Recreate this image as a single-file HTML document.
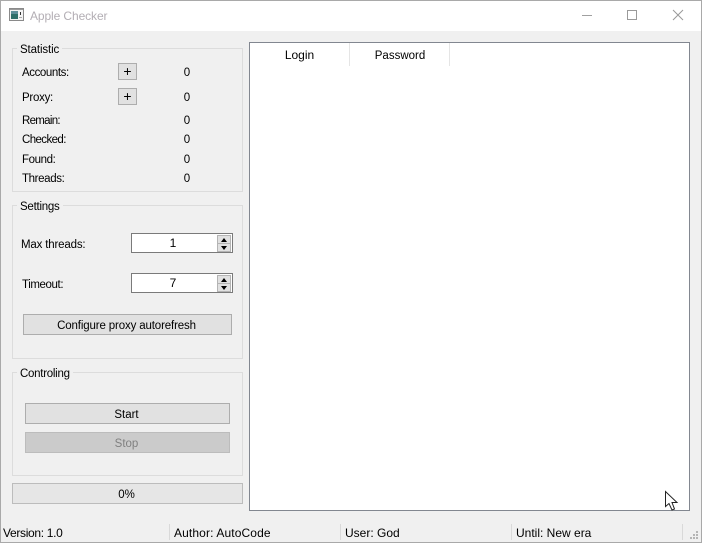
<!DOCTYPE html>
<html><head><meta charset="utf-8"><style>
html,body{margin:0;padding:0}
body{width:702px;height:543px;position:relative;overflow:hidden;background:#f0f0f0;font-family:"Liberation Sans",sans-serif;font-size:11.5px;color:#000}
div{position:absolute;box-sizing:border-box;white-space:nowrap}
.t{height:16px;line-height:18px}
.c{text-align:center}
.g{border:1px solid #dcdcdc}
.gt{background:#f0f0f0;padding:0 3px 0 3px;height:16px;line-height:18px}
.b{background:#e1e1e1;border:1px solid #adadad;text-align:center;padding-right:2px}
.s{width:102px;height:20px;background:#fff;border:1px solid #7a7a7a;line-height:19px;font-size:12px;padding-right:18px}
.sb{position:absolute;background:#e1e1e1;border:1px solid #b4b4b4;width:14px;height:9px;padding:0}
.up,.dn{position:absolute;left:3px;width:0;height:0;border-left:3.5px solid transparent;border-right:3.5px solid transparent}
.up{top:2px;border-bottom:4px solid #000}
.dn{top:2px;border-top:4px solid #000}
.t.st{font-size:12px;line-height:16px}
</style></head><body>
<div style="left:0;top:0;width:702px;height:31px;background:#fff"></div>
<div style="left:0;top:0;width:702px;height:543px;border:1px solid #a9a9a9;z-index:5"></div>
<svg style="position:absolute;left:9px;top:8px" width="16" height="14" viewBox="0 0 16 14"><rect x="0.5" y="0.5" width="14" height="12" fill="#f4f4f4" stroke="#8a8a8a"/><rect x="1" y="1" width="13" height="1" fill="#9a9a9a"/><rect x="2" y="3" width="7" height="8" fill="#2f6f6a"/><rect x="2" y="3" width="7" height="3" fill="#5f8f9a"/><rect x="11" y="4" width="1" height="3" fill="#333"/><rect x="10" y="9" width="3" height="1" fill="#aaa"/></svg>
<div class="t st" style="left:30px;top:8px;letter-spacing:-.1px;color:#b3aeb4">Apple Checker</div>
<div style="left:582px;top:15px;width:10px;height:1px;background:#a0a0a0"></div>
<div style="left:627px;top:10px;width:10px;height:10px;border:1px solid #9a9a9a"></div>
<svg style="position:absolute;left:672px;top:9px" width="12" height="12"><path d="M1 1L11 11M11 1L1 11" stroke="#999" stroke-width="1" fill="none"/></svg>

<div class="g" style="left:12px;top:48px;width:231px;height:144px"></div>
<div class="gt" style="left:17px;top:41px;letter-spacing:-.12px">Statistic</div>
<div class="t" style="left:22px;top:64px;letter-spacing:-.42px">Accounts:</div>
<div class="b" style="left:118px;top:63px;width:19px;height:17px;line-height:15px;font-size:14px;padding:0">+</div>
<div class="t c" style="left:177px;top:64px;width:20px">0</div>
<div class="t" style="left:22px;top:89px;letter-spacing:-.27px">Proxy:</div>
<div class="b" style="left:118px;top:88px;width:19px;height:17px;line-height:15px;font-size:14px;padding:0">+</div>
<div class="t c" style="left:177px;top:89px;width:20px">0</div>
<div class="t" style="left:22px;top:112px;letter-spacing:-.7px">Remain:</div>
<div class="t c" style="left:177px;top:112px;width:20px">0</div>
<div class="t" style="left:22px;top:131px;letter-spacing:-.6px">Checked:</div>
<div class="t c" style="left:177px;top:131px;width:20px">0</div>
<div class="t" style="left:22px;top:151px;letter-spacing:-.4px">Found:</div>
<div class="t c" style="left:177px;top:151px;width:20px">0</div>
<div class="t" style="left:22px;top:170px;letter-spacing:-.37px">Threads:</div>
<div class="t c" style="left:177px;top:170px;width:20px">0</div>

<div class="g" style="left:12px;top:205px;width:231px;height:154px"></div>
<div class="gt" style="left:17px;top:198px;letter-spacing:-.25px">Settings</div>
<div class="t" style="left:21px;top:236px;letter-spacing:-.17px">Max threads:</div>
<div class="s c" style="left:131px;top:233px">1
<div class="sb" style="left:85px;top:1px"><div class="up"></div></div><div class="sb" style="left:85px;top:9px"><div class="dn"></div></div></div>
<div class="t" style="left:22px;top:276px;letter-spacing:-.4px">Timeout:</div>
<div class="s c" style="left:131px;top:273px">7
<div class="sb" style="left:85px;top:1px"><div class="up"></div></div><div class="sb" style="left:85px;top:9px"><div class="dn"></div></div></div>
<div class="b" style="left:23px;top:314px;width:209px;height:21px;line-height:22px;letter-spacing:-.14px">Configure proxy autorefresh</div>

<div class="g" style="left:12px;top:372px;width:231px;height:104px"></div>
<div class="gt" style="left:17px;top:365px;letter-spacing:-.27px">Controling</div>
<div class="b" style="left:25px;top:403px;width:205px;height:21px;line-height:22px">Start</div>
<div class="b" style="left:25px;top:432px;width:205px;height:21px;line-height:22px;background:#cbcbcb;border-color:#bcbcbc;color:#808080">Stop</div>
<div class="c" style="left:12px;top:483px;width:231px;height:21px;line-height:22px;background:#e6e6e6;border:1px solid #bcbcbc;padding-right:2px">0%</div>

<div style="left:249px;top:42px;width:441px;height:469px;background:#fff;border:1px solid #828790"></div>
<div class="t st c" style="left:250px;top:47px;width:99px">Login</div>
<div style="left:349px;top:43px;width:1px;height:23px;background:#e5e5e5"></div>
<div class="t c" style="left:350px;top:47px;width:100px">Password</div>
<div style="left:449px;top:43px;width:1px;height:23px;background:#e5e5e5"></div>

<div class="t st" style="left:3px;top:525px;letter-spacing:-.33px">Version: 1.0</div>
<div style="left:169px;top:524px;width:1px;height:16px;background:#d9d9d9"></div>
<div class="t st" style="left:174px;top:525px;letter-spacing:.12px">Author: AutoCode</div>
<div style="left:340px;top:524px;width:1px;height:16px;background:#d9d9d9"></div>
<div class="t st" style="left:345px;top:525px">User: God</div>
<div style="left:511px;top:524px;width:1px;height:16px;background:#d9d9d9"></div>
<div class="t st" style="left:516px;top:525px">Until: New era</div>
<div style="left:682px;top:524px;width:1px;height:16px;background:#d9d9d9"></div>
<svg style="position:absolute;left:690px;top:531px" width="10" height="10"><g fill="#b5b5b5"><rect x="6" y="0" width="2" height="2"/><rect x="3" y="3" width="2" height="2"/><rect x="6" y="3" width="2" height="2"/><rect x="0" y="6" width="2" height="2"/><rect x="3" y="6" width="2" height="2"/><rect x="6" y="6" width="2" height="2"/></g></svg>

<svg style="position:absolute;left:664px;top:490px;z-index:6" width="16" height="22" viewBox="0 0 16 22"><path d="M1.5 1.5V16.5L5 13.5L8 20L10.5 19L8 12.5H13Z" fill="#fff" stroke="#222" stroke-width="1"/></svg>
</body></html>
